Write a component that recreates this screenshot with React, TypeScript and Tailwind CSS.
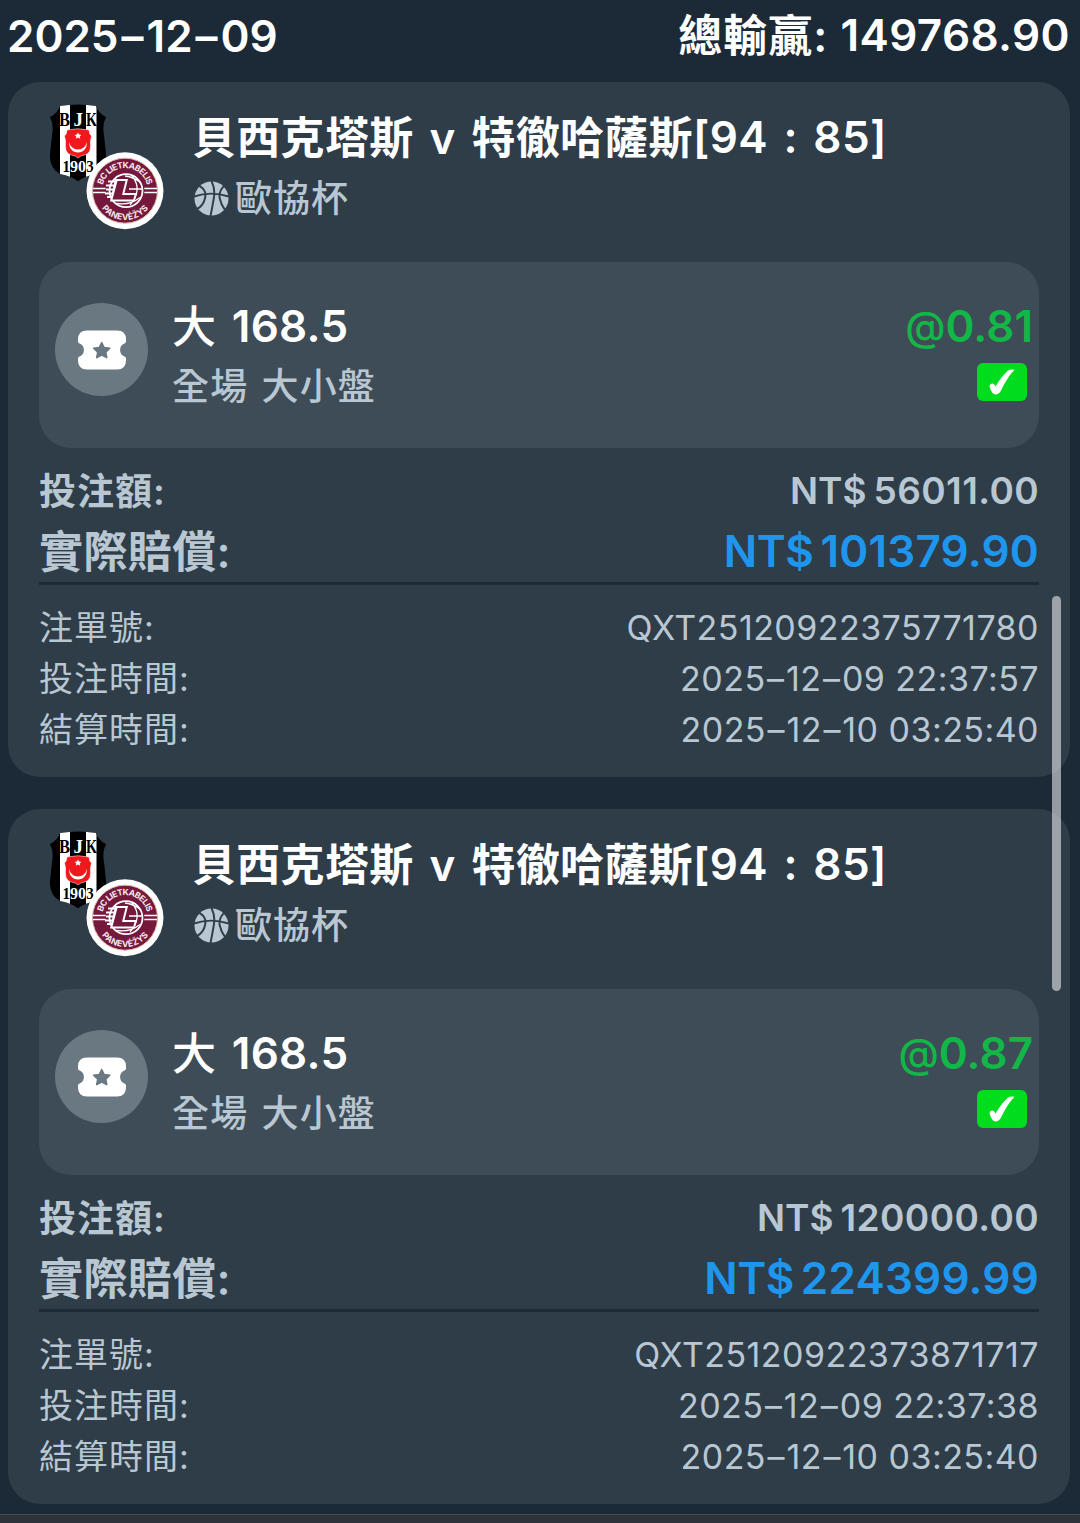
import { Fragment } from 'react';

type Bet = {
  teams: string;
  score: string;
  league: string;
  pick: string;
  market: string;
  odds: string;
  stake: string;
  payout: string;
  orderNo: string;
  placedAt: string;
  settledAt: string;
};

const BETS: Bet[] = [
  {
    teams: '貝西克塔斯 v 特徹哈薩斯',
    score: '[94 : 85]',
    league: '歐協杯',
    pick: '168.5',
    market: '全場 大小盤',
    odds: '0.81',
    stake: '56011.00',
    payout: '101379.90',
    orderNo: 'QXT25120922375771780',
    placedAt: '2025–12–09 22:37:57',
    settledAt: '2025–12–10 03:25:40',
  },
  {
    teams: '貝西克塔斯 v 特徹哈薩斯',
    score: '[94 : 85]',
    league: '歐協杯',
    pick: '168.5',
    market: '全場 大小盤',
    odds: '0.87',
    stake: '120000.00',
    payout: '224399.99',
    orderNo: 'QXT25120922373871717',
    placedAt: '2025–12–09 22:37:38',
    settledAt: '2025–12–10 03:25:40',
  },
];

function TeamLogos() {
  return (
    <svg viewBox="0 0 120 130" className="w-[120px] h-[130px] shrink-0">
      <defs>
        <clipPath id="shield">
          <path d="M11 2Q29-1 47 2Q49 9 57 13Q53 21 55 31L57 50Q58 64 47 70Q35 72 29 77.500Q23 72 11 70Q0 64 1 50L3 31Q5 21 1 13Q9 9 11 2Z" />
        </clipPath>
        <path id="arcTop" d="M53 87A23 23 0 0 1 99 87" />
        <path id="arcBottom" d="M47 87A29 29 0 0 0 105 87" />
      </defs>
      <g clipPath="url(#shield)">
        <rect width="58" height="80" fill="#000" />
        <path d="M11 0h10v80H11zM37 0h10.500v80H37z" fill="#fff" />
      </g>
      <path d="M18 26q11-2.500 22 0q0 4 2.500 6q-1.500 4-1 10q0 8-6 9q-4 .5-6.500 3q-2.500-2.500-6.500-3q-6-1-6-9q.5-6-1-10q2.500-2 2.500-6Z" fill="#f0181c" stroke="#fff" strokeWidth=".5" />
      <path d="M20.500 38a8.700 8.700 0 1 0 17 0a8 7 0 1 1-17 0Z" fill="#fff" />
      <path d="m29 28.500 1.100 2.100 2.300.3-1.700 1.600.5 2.300-2.200-1.200-2.200 1.200.5-2.300-1.700-1.600 2.300-.3z" fill="#fff" />
      <g fontFamily="Liberation Serif, serif" fontWeight="700" fontSize="19">
        <text x="10" y="21.500" textLength="11" lengthAdjust="spacingAndGlyphs" fill="#000">B</text>
        <text x="24.500" y="21.500" fill="#fff">J</text>
        <text x="37" y="21.500" textLength="11" lengthAdjust="spacingAndGlyphs" fill="#000">K</text>
      </g>
      <g fontFamily="Liberation Serif, serif" fontWeight="700" fontSize="16">
        <text x="13.500" y="68" textLength="7.500" lengthAdjust="spacingAndGlyphs" fill="#000">1</text>
        <text x="21" y="68" fill="#fff">9</text>
        <text x="29" y="68" fill="#fff">0</text>
        <text x="37.300" y="68" textLength="7.500" lengthAdjust="spacingAndGlyphs" fill="#000">3</text>
      </g>
      <circle cx="76" cy="86.700" r="38.500" fill="#fff" />
      <circle cx="76" cy="86.700" r="32.500" fill="#74183c" stroke="#d8b9a8" strokeWidth="1" />
      <path d="M44 84.500h64M44 88.500h64" stroke="#fff" strokeWidth="1.400" />
      <circle cx="76" cy="86.700" r="19.500" fill="#74183c" />
      <g fill="none" stroke="#fff" strokeWidth="1.300">
        <circle cx="77" cy="86.700" r="16.500" strokeWidth="1.800" />
        <path d="M76 72q9 1 16 7M83 72q6 7 5 15t-7 14M68 99.500q13 2 23-6M93 85H80" />
      </g>
      <path d="M59 77.500h10M57 81.500h11M57 85.500h10M56 89.500h10M58 93h7" stroke="#fff" strokeWidth="2" />
      <path d="M66 75h13l-3.500 14H88l-2.500 8.500H61z" fill="#fff" />
      <path d="M68.500 77H76.500l-3.500 14h12.500l-1.200 4.500H63.500z" fill="#74183c" />
      <g fontFamily="Inter, sans-serif" fontWeight="700" fontSize="8.500" fill="#f8e9ee" textAnchor="middle">
        <text textLength="60">
          <textPath href="#arcTop" startOffset="50%">BC LIETKABELIS</textPath>
        </text>
        <text textLength="54">
          <textPath href="#arcBottom" startOffset="50%">PANEVĖŽYS</textPath>
        </text>
      </g>
    </svg>
  );
}

function BasketballIcon() {
  return (
    <svg viewBox="0 0 36 36" className="w-[35px] h-[35px] mt-px shrink-0">
      <circle cx="18" cy="18" r="17.500" fill="#b9c7d3" />
      <path
        d="M18 0Q22 8 20.500 17T17 36M0 16Q17 10 36 16M5.500 5Q13 9 11.500 17T3 29M31 5Q25 11 26.500 18T32 30"
        fill="none"
        stroke="#2e3d48"
        strokeWidth="2"
      />
    </svg>
  );
}

function TicketIcon() {
  return (
    <div className="w-[93px] h-[93px] rounded-full bg-[#6a7882] flex items-center justify-center shrink-0">
      <svg viewBox="0 0 48 40" className="w-12 h-10">
        <path
          d="M9 .5h30q9 0 9 9v2q0 1.500-1.500 2a7 7 0 0 0 0 13q1.500.5 1.500 2v2q0 9-9 9H9q-9 0-9-9v-2q0-1.500 1.500-2a7 7 0 0 0 0-13Q0 13 0 11.500v-2q0-9 9-9Z"
          fill="#fff"
        />
        <path
          d="m23.700 12.500 2.500 5 5.600.8-4 3.900 1 5.500-5.100-2.600-5 2.600 1-5.500-4.100-3.900 5.600-.8Z"
          fill="#6a7882"
          stroke="#6a7882"
          strokeWidth="1.500"
          strokeLinejoin="round"
        />
      </svg>
    </div>
  );
}

function WinBadge() {
  return (
    <div className="w-[50px] h-[38px] mr-[7px] rounded-md bg-[#00dc1e] flex items-center justify-center">
      <svg viewBox="0 0 26 26" className="w-[26px] h-[26px]">
        <path d="M.5 17.500q0-2.500 2.500-3 2.500-.3 3.500 3Q12 8 19 1.500 21.500 0 25.500.7 18.500 8 12.500 20.500q-2 4.500-5.500 5Q3 25.800 .5 17.500Z" fill="#fff" />
      </svg>
    </div>
  );
}

// dashes in dates get a bit of air on both sides
function Dashed({ text, wide }: { text: string; wide?: boolean }) {
  return (
    <>
      {text.split('–').map((part, i) => (
        <Fragment key={i}>
          {i > 0 && <span className={wide ? 'mx-[3px]' : 'mx-[1.5px]'}>–</span>}
          {part}
        </Fragment>
      ))}
    </>
  );
}

function DetailRow({ label, value }: { label: string; value: string }) {
  return (
    <div className="h-[51px] flex items-center justify-between text-[34px] text-[#b9c7d3]">
      <span className="tracking-[1px] pt-px">{label}:</span>
      <span className="tracking-[0.45px]">
        <Dashed text={value} />
      </span>
    </div>
  );
}

function BetCard({ bet }: { bet: Bet }) {
  return (
    <div className="h-[695px] rounded-[32px] bg-[#2e3d48] px-[31px] pt-[22px]">
      <div className="flex h-[158px] pl-2.5">
        <TeamLogos />
        <div className="pl-[25px]">
          <div className="h-[66px] -ml-0.5 flex items-center text-[44px] font-semibold text-white whitespace-pre">
            <span className="tracking-[0.3px] [word-spacing:4.500px] pt-0.5">{bet.teams}</span>
            <span className="tracking-[0.4px] [word-spacing:4px]">{bet.score}</span>
          </div>
          <div className="h-[55px] flex items-center gap-1.5 text-[37px] font-medium text-[#b9c7d3]">
            <BasketballIcon />
            <span className="tracking-[1px] pt-px">{bet.league}</span>
          </div>
        </div>
      </div>

      <div className="h-[186px] rounded-[32px] bg-[#3d4c56] flex pl-4 pr-[6px] pt-[35px]">
        <div className="pt-1.5">
          <TicketIcon />
        </div>
        <div className="flex-1 pl-6">
          <div className="h-[60px] flex items-center gap-1 text-[44px] font-semibold text-white whitespace-pre">
            <span className="font-medium">大 </span>
            <span className="pb-0.5 tracking-[0.3px]">{bet.pick}</span>
          </div>
          <div className="h-[58px] flex items-center text-[37px] font-medium text-[#b9c7d3] tracking-[1.2px] [word-spacing:2px]">
            {bet.market}
          </div>
        </div>
        <div className="flex flex-col items-end">
          <div className="h-[60px] pb-0.5 flex items-center text-[44px] font-semibold text-[#12b748]">
            <span className="text-[41px] font-medium">@</span>
            <span>{bet.odds}</span>
          </div>
          <div className="pt-1.5 -mr-px">
            <WinBadge />
          </div>
        </div>
      </div>

      <div className="pt-[13px]">
        <div className="h-[60px] flex items-center justify-between text-[37px] font-semibold text-[#b9c7d3]">
          <span className="tracking-[1px] pt-px">投注額:</span>
          <span className="flex gap-[7px] pb-px">
            <span>NT$</span>
            <span className="tracking-[0.4px]">{bet.stake}</span>
          </span>
        </div>
        <div className="h-[61px] flex items-center justify-between text-[44px] font-semibold text-[#b9c7d3]">
          <span className="tracking-[0.4px] pt-px">實際賠償:</span>
          <span className="flex gap-[7px] pb-px text-[#1f96ed]">
            <span className="tracking-[-0.5px]">NT$</span>
            <span className="tracking-[0.2px]">{bet.payout}</span>
          </span>
        </div>
      </div>

      <div className="border-t-[3px] border-[#1c2b37] pt-[17px]">
        <DetailRow label="注單號" value={bet.orderNo} />
        <DetailRow label="投注時間" value={bet.placedAt} />
        <DetailRow label="結算時間" value={bet.settledAt} />
      </div>
    </div>
  );
}

export default function App() {
  return (
    <div className="relative w-[1080px] h-[1523px] overflow-hidden flex flex-col bg-[#1c2a37] font-['Inter','Noto_Sans_CJK_TC',sans-serif] leading-none">
      <header className="h-[82px] pl-[7px] pr-2.5 pb-[11px] flex items-center justify-between text-[44px] font-semibold text-white">
        <span>
          <Dashed text="2025–12–09" wide />
        </span>
        <span className="flex whitespace-pre">
          <span className="tracking-[1px] pt-px">總輸贏: </span>
          <span className="tracking-[0.4px]">149768.90</span>
        </span>
      </header>
      <main className="flex flex-col gap-8 pl-2 pr-2.5">
        {BETS.map((bet) => (
          <BetCard key={bet.orderNo} bet={bet} />
        ))}
      </main>
      <div className="mt-auto h-[9px] bg-[#2d3338] border-t border-[#444c50]" />
      <div className="absolute left-[1052px] top-[596px] w-[9px] h-[395px] rounded-full bg-[#f8f8fc]/55" />
    </div>
  );
}
